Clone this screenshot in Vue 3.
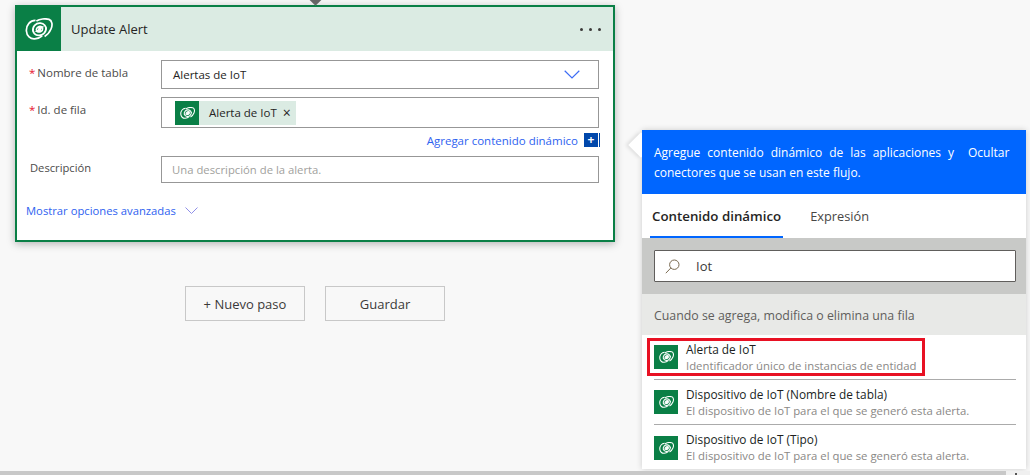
<template>
  <div class="page">
    <svg class="defs" width="0" height="0">
      <symbol id="dv" viewBox="0 0 28 22">
        <path d="M10.5 2.4C5.4 2.2 1 7 1.4 13 1.7 18 5.4 21.2 9.6 20.9 12.6 20.7 15.4 19.4 17.2 17.8" />
        <path d="M11.4 3C14.6 1 20.4 .2 24 1.4 27.2 2.6 27.8 7 26 11 24.6 14.4 22 17 19.6 18.4" />
        <path d="M8 13.4C7 8.6 11 4.8 15.4 5.2 19 5.6 21.6 8.6 21 11.4" />
        <path d="M21 9.4C21.6 14.4 17.6 17.8 13.4 17.4 10.4 17 8.4 15 8 12.6" />
        <path d="M11.4 11.6C11.4 9.2 14.4 7.8 16.8 8.8 14.8 9.2 13.8 10.4 13.8 11.8 13.6 13.2 11.6 13.2 11.4 11.6Z" />
        <path d="M17.6 10.6C17.8 13 14.6 14.8 12.2 13.6 14.2 13.4 15.2 12.2 15.4 10.8 15.6 9.4 17.4 9.2 17.6 10.6Z" />
      </symbol>
    </svg>

    <section class="card">
      <header class="card-head">
        <span class="logo"><svg class="dv"><use href="#dv" /></svg></span>
        <h2>Update Alert</h2>
        <span class="dots"><i></i><i></i><i></i></span>
      </header>
      <div class="card-body">
        <div class="row">
          <label><b>*</b>Nombre de tabla</label>
          <div class="field select">
            <span>Alertas de IoT</span>
            <svg class="chev" viewBox="0 0 16 9"><path d="M.7.8 8 8 15.3.8" /></svg>
          </div>
        </div>
        <div class="row row-id">
          <label><b>*</b>Id. de fila</label>
          <div class="field token-field">
            <span class="token">
              <span class="token-logo"><svg class="dv"><use href="#dv" /></svg></span>
              <span class="token-text">Alerta de IoT</span>
              <span class="token-x">×</span>
            </span>
          </div>
        </div>
        <div class="add-dyn">
          <a>Agregar contenido dinámico</a>
          <span class="plus">+</span>
        </div>
        <div class="row row-desc">
          <label class="plain">Descripción</label>
          <div class="field desc">Una descripción de la alerta.</div>
        </div>
        <div class="advanced">
          <a>Mostrar opciones avanzadas</a>
          <svg class="chev-sm" viewBox="0 0 13 7"><path d="M.5.5 6.5 6.5 12.5.5" /></svg>
        </div>
      </div>
    </section>

    <div class="actions">
      <button>+ Nuevo paso</button>
      <button>Guardar</button>
    </div>

    <aside class="panel">
      <span class="beak"></span>
      <div class="panel-top">
        <p>Agregue contenido dinámico de las aplicaciones y conectores que se usan en este flujo.</p>
        <span class="hide">Ocultar</span>
      </div>
      <nav class="tabs">
        <span class="tab active">Contenido dinámico</span>
        <span class="tab">Expresión</span>
      </nav>
      <div class="search-wrap">
        <div class="search">
          <svg class="glass" viewBox="0 0 15 15"><circle cx="9.3" cy="5.7" r="4.7" /><path d="M5.8 9 .8 14.2" /></svg>
          <span>Iot</span>
        </div>
      </div>
      <div class="group">Cuando se agrega, modifica o elimina una fila</div>
      <ul class="items">
        <li v-for="item in items" :key="item.title" :class="{ picked: item.picked }">
          <span class="item-logo"><svg class="dv"><use href="#dv" /></svg></span>
          <div class="item-text">
            <strong>{{ item.title }}</strong>
            <small>{{ item.sub }}</small>
          </div>
        </li>
      </ul>
    </aside>

    <span class="top-notch"></span>
    <div class="scroll"><span class="thumb"></span><span class="arrow"></span></div>
  </div>
</template>

<script setup>
const items = [
  { title: 'Alerta de IoT', sub: 'Identificador único de instancias de entidad', picked: true },
  { title: 'Dispositivo de IoT (Nombre de tabla)', sub: 'El dispositivo de IoT para el que se generó esta alerta.' },
  { title: 'Dispositivo de IoT (Tipo)', sub: 'El dispositivo de IoT para el que se generó esta alerta.' }
]
</script>

<style>
html, body { margin: 0; background: #f8f8f8; overflow: hidden; }
</style>

<style scoped>
.page {
  position: relative; width: 1030px; height: 475px; overflow: hidden;
  background: #f8f8f8; color: #252423;
  font-family: "Open Sans", "Noto Sans", sans-serif; font-size: 11.5px;
  padding: 5px 0 0 15px; box-sizing: border-box;
}
.defs { position: absolute; }
.dv { fill: none; stroke: #fff; stroke-width: 1.7; }

.card {
  width: 600px; height: 237px; box-sizing: border-box;
  border: 2px solid #0a7f46; background: #fff;
  box-shadow: 0 2px 8px rgba(0,0,0,0.28);
}
.card-head { display: flex; align-items: center; height: 44px; background: #dbebe3; margin-left: -1px; }
.logo { width: 45px; height: 44px; background: #0a7f46; display: flex; align-items: center; justify-content: center; }
.logo .dv { width: 28px; height: 22px; }
h2 { margin: 0 0 0 10px; font-size: 13px; font-weight: 400; flex: 1; color: #252423; }
.dots { display: flex; gap: 6px; margin-right: 12px; }
.dots i { width: 3px; height: 3px; border-radius: 50%; background: #3b3a39; }

.card-body { padding: 9px 14px 0 12px; }
.row { display: flex; }
label { width: 132px; padding-top: 5px; color: #4c4b4a; }
label b { color: #e8112d; font-weight: 400; margin-right: 2px; }
label.plain { padding: 4px 0 0 1px; width: 131px; font-size: 11.2px; }
.field { flex: 1; box-sizing: border-box; border: 1px solid #979797; background: #fff; display: flex; align-items: center; }
.select { height: 29px; padding: 0 18px 0 11px; justify-content: space-between; }
.chev { width: 16px; height: 9px; fill: none; stroke: #3d6cf5; stroke-width: 1.2; }
.row-id { margin-top: 8px; }
.token-field { height: 31px; padding: 0 13px; }
.token { display: flex; align-items: center; height: 24px; background: #dbebe3; }
.token-logo { width: 24px; height: 24px; background: #0a7f46; display: flex; align-items: center; justify-content: center; }
.token-logo .dv { width: 15px; height: 12px; stroke-width: 2; }
.token-text { margin-left: 10px; }
.token-x { margin: 0 5px 0 6px; font-size: 14px; line-height: 14px; }
.add-dyn { display: flex; justify-content: flex-end; align-items: center; height: 24px; margin-bottom: 4px; }
a { color: #2e62f0; }
.plus {
  width: 15px; height: 14px; margin-left: 6px; background: #0047ab; color: #fff; font-weight: 700;
  font-size: 12px; line-height: 13px; text-align: center;
  border-right: 1px solid #fff; box-sizing: border-box; box-shadow: 1px 0 0 #0047ab;
}
.desc { height: 27px; padding-left: 10px; color: #a19f9d; font-size: 11.3px; }
.advanced { display: flex; align-items: center; gap: 9px; margin: 20px 0 0 -3px; font-size: 11.25px; }
.chev-sm { width: 13px; height: 7px; fill: none; stroke: #8f8fe8; stroke-width: 1; }

.actions { display: flex; gap: 20px; margin: 44px 0 0 170px; }
button {
  width: 120px; height: 35px; background: #f8f8f8; border: 1px solid #c8c8c8;
  font: inherit; font-size: 13px; color: #3b3a39; padding: 0;
}

.panel {
  position: absolute; left: 642px; top: 130px; width: 384px; height: 339px;
  background: #fff; box-shadow: 0 0 6px rgba(0,0,0,0.18);
}
.beak {
  position: absolute; left: -10px; top: 6px; width: 18px; height: 18px;
  background: #fff; transform: rotate(45deg); box-shadow: -2px 2px 4px rgba(0,0,0,0.1);
}
.panel-top {
  position: relative; display: flex; height: 64px; box-sizing: border-box;
  padding: 13px 16px 0 12px; gap: 14px; background: #0066ff; color: #fff; line-height: 20px; font-size: 12px;
}
.panel-top p { margin: 0; width: 300px; text-align: justify; }
.tabs { display: flex; height: 44px; gap: 25px; padding: 0 8px; }
.tab { padding: 0 2px; line-height: 44px; color: #484644; font-size: 12.8px; box-sizing: border-box; height: 44px; }
.tab.active { font-weight: 600; font-size: 13.3px; color: #252423; border-bottom: 2px solid #0066ff; }
.search-wrap { height: 56px; background: #c8c9c7; padding: 12px 10px 0 12px; box-sizing: border-box; }
.search {
  height: 32px; box-sizing: border-box; border: 1px solid #605e5c; border-radius: 1px; background: #fff;
  display: flex; align-items: center; padding-left: 10px; gap: 16px; font-size: 13px; color: #3b3a39;
}
.glass { width: 15px; height: 15px; fill: none; stroke: #7a6a50; stroke-width: 1; }
.group { height: 41px; line-height: 43px; background: #e8e9e7; padding-left: 12px; color: #605e5c; font-size: 12.35px; }
.items { list-style: none; margin: 0; padding: 0 10px 0 12px; }
.items li {
  position: relative; display: flex; align-items: center; height: 45px; gap: 8px;
  border-bottom: 1px solid #ababab; box-sizing: border-box;
}
.items li:last-child { border-bottom: none; }
.items li.picked::after {
  content: ""; position: absolute; left: -7px; top: 3px; right: 91px; bottom: 3px;
  border: 3px solid #e81123;
}
.item-logo { width: 24px; height: 24px; background: #0a7f46; display: flex; align-items: center; justify-content: center; flex: none; }
.item-logo .dv { width: 15px; height: 12px; stroke-width: 2; }
.item-text { display: flex; flex-direction: column; gap: 1px; line-height: 16px; }
.item-text strong { font-weight: 500; color: #201f1e; font-size: 11.85px; }
.item-text small { font-size: 11.35px; color: #8a8886; }

.top-notch {
  position: absolute; left: 311px; top: -5px; width: 9px; height: 9px;
  background: #666; transform: rotate(45deg);
}
.scroll { position: absolute; left: 0; bottom: 0; width: 100%; height: 4px; background: #f0f0f0; }
.thumb { display: block; width: 1006px; height: 4px; background: #c8c8c8; }
.arrow { position: absolute; left: 1015px; bottom: 0; width: 2px; height: 2px; background: #555; }
</style>
